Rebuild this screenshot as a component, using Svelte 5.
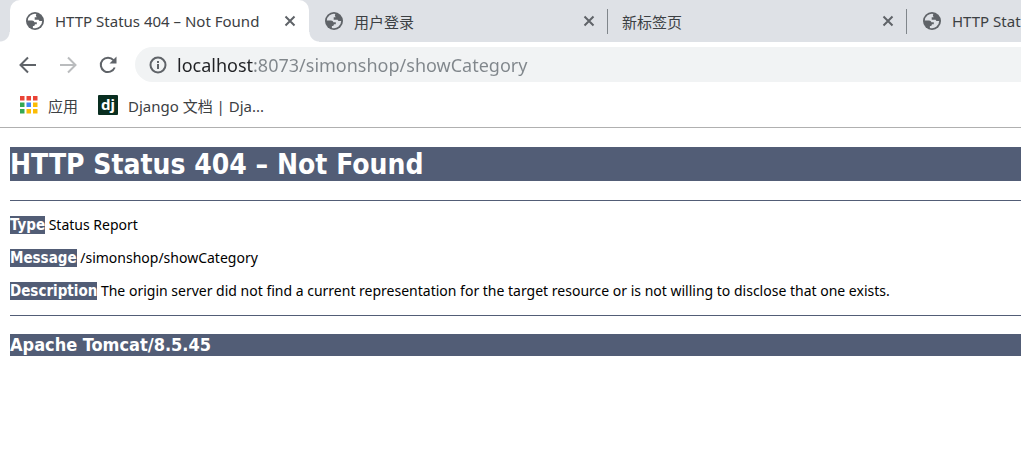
<script>
  const tabs = [
    { title: 'HTTP Status 404 – Not Found', icon: true, active: true },
    { title: '用户登录', icon: true },
    { title: '新标签页', icon: false },
    { title: 'HTTP Status 404 – Not Found', icon: true }
  ];
  const dots = ['#ea4335', '#ea4335', '#ea4335', '#34a853', '#4285f4', '#fbbc05', '#34a853', '#fbbc05', '#fbbc05'];
  let url = $state('localhost:8073/simonshop/showCategory');
</script>

<div class="browser">
  <div class="tabs">
    {#each tabs as tab}
      <div class="tab" class:active={tab.active} class:plain={!tab.icon}>
        <button class="title">
          {#if tab.icon}
            <svg class="globe" viewBox="0 0 18 18" aria-hidden="true">
              <circle cx="9" cy="9" r="9" fill="#5f6368" />
              <path fill={tab.active ? '#fff' : '#dee1e6'} d="M10.4 1.9A7.2 7.2 0 0 0 1.8 8.6H4.600c1.900 0 3.400.3 3.800 1.700h2.400v1.900H8.900c0 1.200-.6 1.900-2 1.900v1.800A7.200 7.200 0 0 0 16.200 9h-2.400c-.5 0-.9-.4-1.200-1.200H8.700V5.200h2c-.4-.5-.8-1-.8-1.600 0-.7.200-1.200.5-1.700z" />
            </svg>
          {/if}
          <span>{tab.title}</span>
        </button>
        <button class="close" aria-label="关闭">
          <svg viewBox="0 0 12 12"><path d="M1.500 1.500l9 9M10.500 1.500l-9 9" /></svg>
        </button>
      </div>
    {/each}
  </div>

  <div class="toolbar">
    <button class="nav" aria-label="后退">
      <svg viewBox="0 0 20 20"><path d="M18 10H3M10 2.500L2.500 10l7.500 7.500" /></svg>
    </button>
    <button class="nav off" aria-label="前进" disabled>
      <svg viewBox="0 0 20 20"><path d="M2 10h15M10 2.500l7.500 7.500-7.500 7.500" /></svg>
    </button>
    <button class="nav" aria-label="重新加载">
      <svg viewBox="0 0 20 20"><path d="M16.700 12.500A7.200 7.200 0 1 1 15.500 5.200" /><path class="solid" d="M18.500 1.500v7h-7z" /></svg>
    </button>
    <div class="omnibox">
      <svg class="info" viewBox="0 0 18 18" aria-hidden="true">
        <circle cx="9" cy="9" r="7.500" /><path d="M9 8v5M9 5v2" />
      </svg>
      <input type="text" aria-label="地址" bind:value={url} spellcheck="false" />
    </div>
  </div>

  <nav class="bookmarks">
    <a href="#apps">
      <svg class="apps" viewBox="0 0 18 18" aria-hidden="true">
        {#each dots as fill, i}
          <rect x={(i % 3) * 6.500} y={Math.floor(i / 3) * 6.500} width="4.500" height="4.500" {fill} />
        {/each}
      </svg>
      <span>应用</span>
    </a>
    <a href="#django">
      <span class="dj" aria-hidden="true">dj</span>
      <span>Django 文档 | Dja...</span>
    </a>
  </nav>
</div>

<main>
  <h1>HTTP Status 404 – Not Found</h1>
  <hr />
  <p><b>Type</b> Status Report</p>
  <p><b>Message</b> /simonshop/showCategory</p>
  <p><b>Description</b> The origin server did not find a current representation for the target resource or is not willing to disclose that one exists.</p>
  <hr />
  <h3>Apache Tomcat/8.5.45</h3>
</main>

<style>
  :global(body) { margin: 0; background: #fff; }
  .browser {
    font-family: "Noto Sans", "Noto Sans CJK SC", sans-serif;
    font-size: 15px;
    color: #3c4043;
    border-bottom: 1px solid #b0b0b0;
  }
  button { border: 0; padding: 0; background: none; font: inherit; color: inherit; }
  svg { display: block; flex: none; fill: none; stroke-width: 2; }
  .tabs { display: flex; height: 42px; padding-left: 10px; background: #dee1e6; overflow: hidden; }
  .tab {
    position: relative;
    display: flex;
    flex: 0 0 299px;
    align-items: center;
    box-sizing: border-box;
    padding: 0 13px 0 16px;
  }
  .tab.plain { padding-left: 14px; }
  .tab:not(.active)::after {
    content: "";
    position: absolute;
    right: 0;
    top: 9px;
    width: 1px;
    height: 25px;
    background: #80868b;
  }
  .active { background: #fff; border-radius: 10px 10px 0 0; }
  .active::before, .active::after {
    content: "";
    position: absolute;
    bottom: 0;
    width: 10px;
    height: 10px;
  }
  .active::before { left: -10px; background: radial-gradient(circle at 0 0, #dee1e6 9px, #fff 10px); }
  .active::after { right: -10px; background: radial-gradient(circle at 100% 0, #dee1e6 9px, #fff 10px); }
  .title { display: flex; flex: 1; align-items: center; gap: 11px; min-width: 0; white-space: nowrap; }
  .globe { width: 18px; height: 18px; }
  .close svg { width: 12px; height: 12px; stroke: #5f6368; }
  .toolbar { display: flex; align-items: center; height: 45px; padding-left: 18px; }
  .nav { width: 20px; margin-right: 20px; }
  .nav:last-of-type { margin-right: 17px; }
  .nav svg { width: 20px; height: 20px; stroke: #5f6368; }
  .nav.off svg { stroke: #babcbe; }
  .nav .solid { fill: #5f6368; stroke: none; }
  .omnibox {
    display: flex;
    flex: 1;
    align-items: center;
    gap: 10px;
    height: 35px;
    padding-left: 14px;
    background: #f1f3f4;
    border-radius: 18px 0 0 18px;
  }
  .info { width: 18px; height: 18px; stroke: #5f6368; }
  input {
    flex: 1;
    min-width: 0;
    padding: 0;
    border: 0;
    outline: 0;
    font: inherit;
    font-size: 18px;
    color: transparent;
    caret-color: #202124;
    background: linear-gradient(90deg, #202124 76px, #80868b 76px);
    background-clip: text;
  }
  .bookmarks { display: flex; align-items: center; gap: 20px; height: 36px; padding: 0 0 4px 20px; }
  .bookmarks a { display: flex; align-items: center; gap: 10px; color: inherit; text-decoration: none; }
  .apps { width: 18px; height: 18px; }
  .dj {
    width: 20px;
    height: 20px;
    border-radius: 1px;
    background: #092e20;
    color: #fff;
    font: bold 15px/18px "Noto Sans", sans-serif;
    text-align: center;
  }
  main {
    margin: 19px 0 0 10px;
    font-family: "Noto Sans", sans-serif;
    font-size: 14px;
    line-height: 18px;
    color: #000;
  }
  h1, h3, b { background: #525d76; color: #fff; }
  h1 { margin: 0; padding-top: 2px; font: bold 28px/32px "DejaVu Sans Condensed", sans-serif; }
  h3 { margin: 0; font: bold 18px/22px "DejaVu Sans Condensed", sans-serif; }
  b { font: bold 15px/18px "DejaVu Sans Condensed", sans-serif; }
  hr { height: 1px; margin: 19px 0 0; border: 0; background: #525d76; }
  p { margin: 15px 0; }
  p + hr { margin: 15px 0 18px; }
</style>
